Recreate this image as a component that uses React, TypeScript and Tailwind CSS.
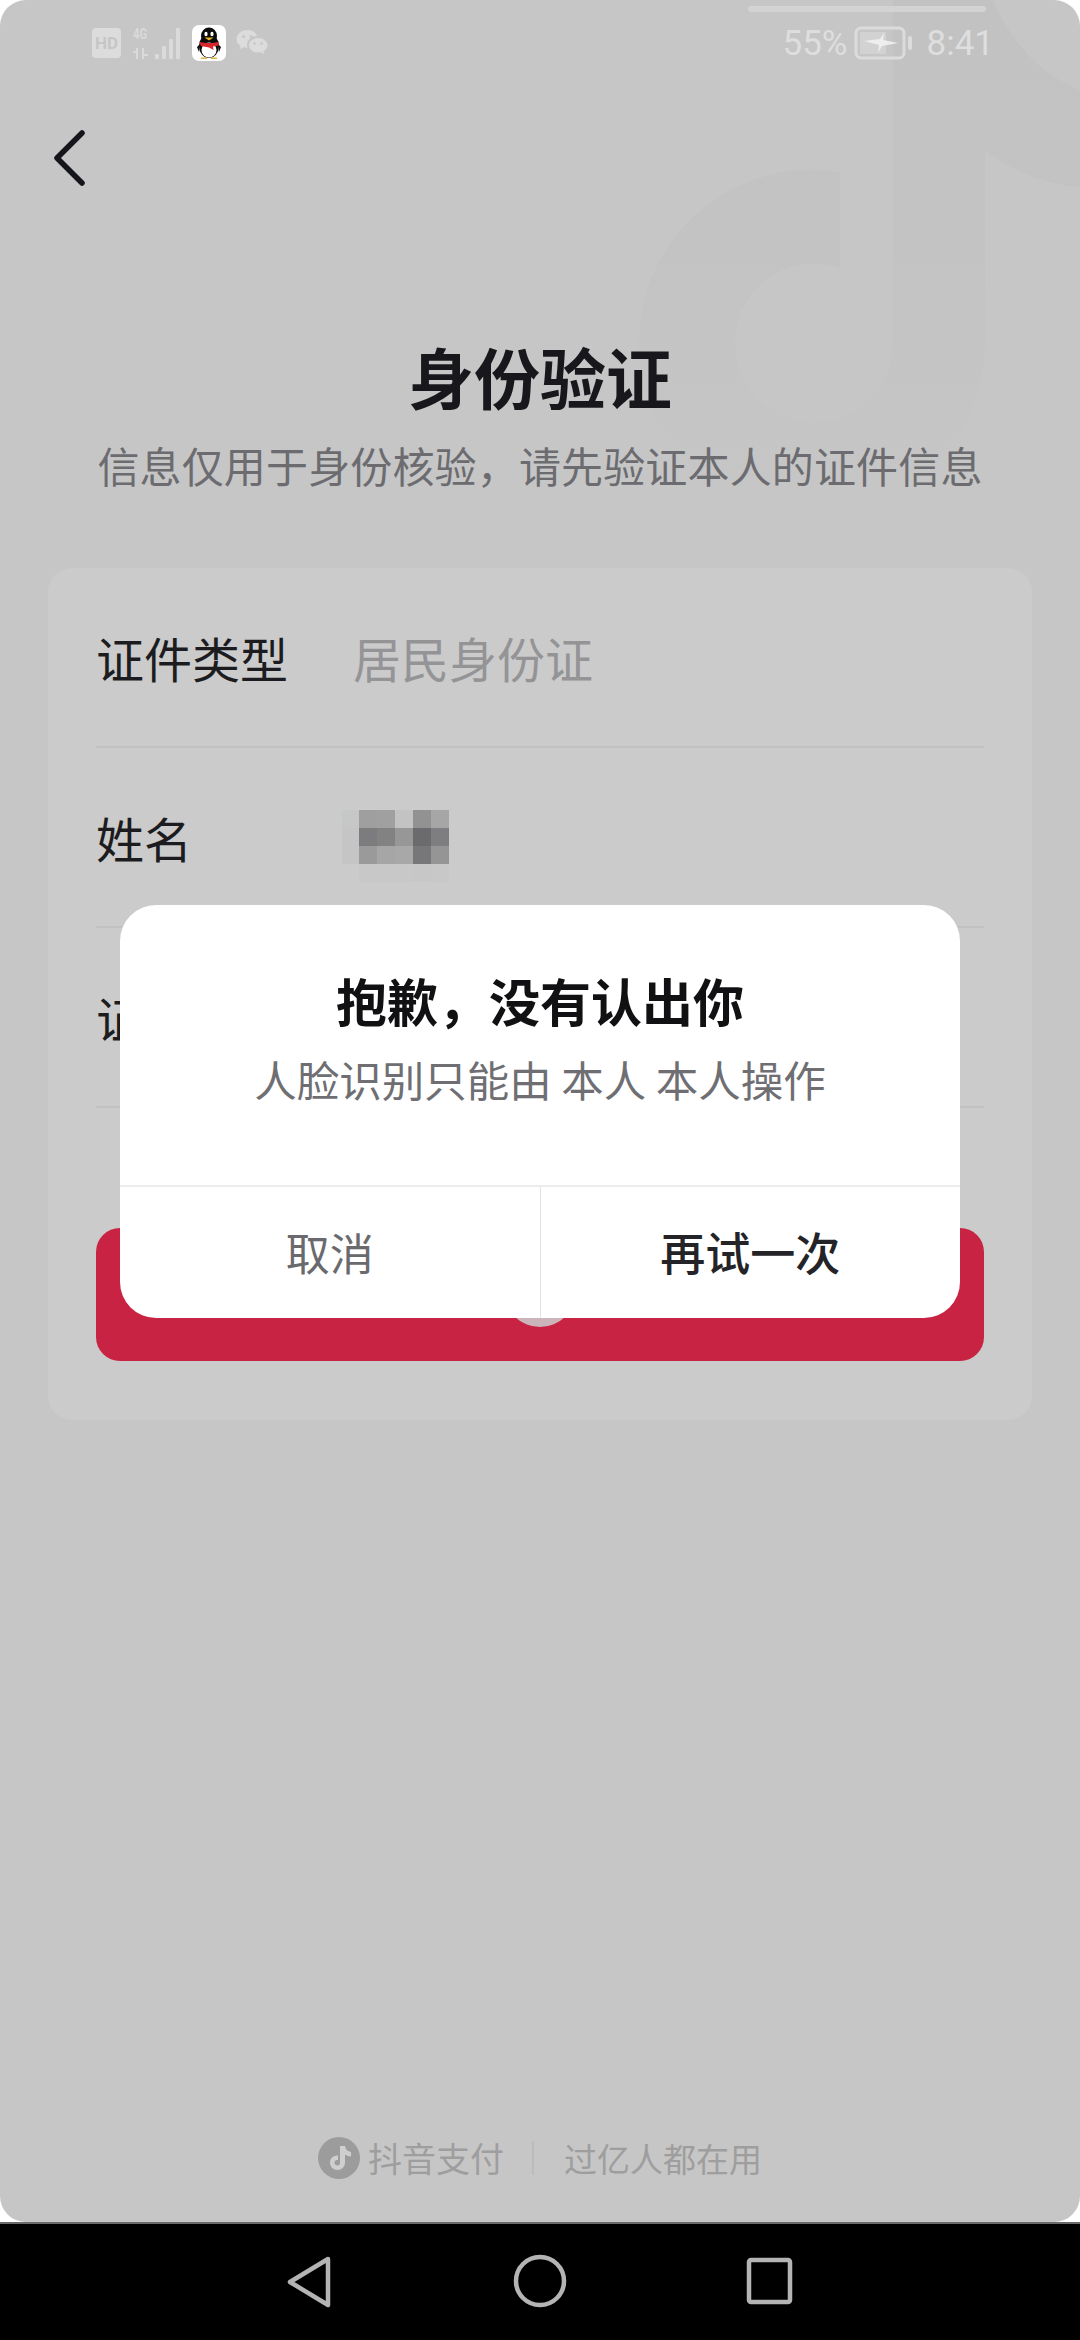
const cjk = 'font-["Noto_Sans_CJK_SC","Noto_Sans",sans-serif]';

// mosaic over the real name, cell by cell
const mosaic = [
  'bg-[#c6c7c7]', 'bg-[#9f9f9f]', 'bg-[#a0a0a0]', 'bg-[#c3c3c3]', 'bg-[#929292]', 'bg-[#a6a6a6]',
  'bg-[#c5c5c5]', 'bg-[#7c7c7e]', 'bg-[#828282]', 'bg-[#979797]', 'bg-[#6b6b6d]', 'bg-[#7e7e80]',
  'bg-[#c5c5c5]', 'bg-[#9a9a9a]', 'bg-[#a6a6a6]', 'bg-[#a8a8a8]', 'bg-[#77777a]', 'bg-[#959595]',
  'bg-[#cbcbcb]', 'bg-[#c8c8c8]', 'bg-[#c8c8c8]', 'bg-[#c8c8c8]', 'bg-[#c7c7c7]', 'bg-[#c8c8c8]',
];

function Watermark() {
  return (
    <svg className="absolute left-0 top-0" width="1080" height="520" viewBox="0 0 1080 520">
      <defs>
        <linearGradient id="note" x1="0" y1="0" x2="0" y2="1">
          <stop offset="0" stopColor="#c2c2c2" />
          <stop offset="0.5" stopColor="#c3c3c3" />
          <stop offset="0.8" stopColor="#c5c5c5" />
          <stop offset="1" stopColor="#c6c6c6" />
        </linearGradient>
      </defs>
      <path
        d="M893 0L993 0C1010 40 1040 75 1080 90L1080 187C1045 185 1010 170 985 150L985 345A173 173 0 1 1 840 172L840 268A79 79 0 1 0 893 347Z"
        fill="url(#note)"
      />
    </svg>
  );
}

function QQIcon() {
  return (
    <svg width="34" height="36" viewBox="0 0 34 36">
      <rect width="34" height="36" rx="7" fill="#fff" />
      <ellipse cx="17" cy="21" rx="10" ry="12" fill="#0b0b0b" />
      <ellipse cx="17" cy="11" rx="8" ry="8.5" fill="#0b0b0b" />
      <path d="M5 22L8 19L7 27ZM29 22L26 19L27 27Z" fill="#0b0b0b" />
      <ellipse cx="17" cy="25" rx="7.5" ry="7.5" fill="#fff" />
      <ellipse cx="14" cy="9" rx="1.6" ry="2.2" fill="#fff" />
      <ellipse cx="20" cy="9" rx="1.6" ry="2.2" fill="#fff" />
      <path d="M12.5 12.5H21.5L17 15.5Z" fill="#eeb31f" />
      <path d="M7 16.5C12 18.5 22 18.5 27 16.5L26.5 20.5L21 21.5L21.5 25L17 22.5L9 21Z" fill="#d8262c" />
      <path d="M9 32.5H15V34H9ZM19 32.5H25V34H19Z" fill="#e3b342" />
    </svg>
  );
}

function WechatIcon() {
  return (
    <svg width="32" height="28" viewBox="0 0 32 28" fill="#dcdcdc">
      <path d="M11.5 1C5.4 1 .5 5 .5 10c0 2.8 1.5 5.3 4 7l-1 3.5 4-2.2c1 .3 2.1.4 3 .4h1.2c-.5-1-.7-2-.7-3 0-4.800 4.400-8.500 10-8.700C19.700 3.400 16 1 11.500 1Z" />
      <path d="M22 9c-5 0-9 3.300-9 7.300s4 7.300 9 7.300c1 0 1.900-.1 2.800-.4l3.400 2-.9-3c2.800-1.400 4.200-3.500 4.200-5.900C31.500 12.300 27 9 22 9Z" />
      <circle cx="7.500" cy="7.500" r="1.500" fill="#c6c6c6" />
      <circle cx="15" cy="7.500" r="1.500" fill="#c6c6c6" />
      <circle cx="18.500" cy="14.500" r="1.300" fill="#c6c6c6" />
      <circle cx="25.500" cy="14.500" r="1.300" fill="#c6c6c6" />
    </svg>
  );
}

function Signal() {
  return (
    <div className="flex items-end gap-[3px] h-[32px]">
      <div className="flex flex-col items-start justify-between h-[32px] w-[19px]">
        <span className="font-['Roboto',sans-serif] font-bold text-[15px] leading-[15px] text-[#dadada] scale-x-75 origin-left">4G</span>
        <svg width="16" height="11" viewBox="0 0 16 11" fill="#dadada">
          <path d="M3 0H5V11H3ZM0 3H3V5H0ZM9 0H11V11H9ZM11 6H15V8H11Z" />
        </svg>
      </div>
      <div className="w-[4px] h-[5px] bg-[#dadada] rounded-[1px]" />
      <div className="w-[4px] h-[13px] bg-[#dadada] rounded-[1px]" />
      <div className="w-[4px] h-[20px] bg-[#dadada] rounded-[1px]" />
      <div className="w-[4px] h-[31px] bg-[#dadada] rounded-[1px]" />
    </div>
  );
}

function Battery() {
  return (
    <svg width="60" height="34" viewBox="0 0 60 34">
      <rect x="2" y="2" width="48" height="30" rx="5" fill="none" stroke="#dcdcdc" strokeWidth="3" />
      <rect x="6" y="6" width="26" height="22" fill="#d2d2d2" />
      <path d="M10 15L26 13L30 7L29 14L44 17L28 20L24 27L25 19Z" fill="#eeeeee" />
      <rect x="54" y="10" width="4" height="14" rx="2" fill="#dcdcdc" />
    </svg>
  );
}

function StatusBar() {
  return (
    <div className="relative flex items-center justify-between h-[86px] pl-[92px] pr-[86px]">
      <div className="absolute left-[748px] top-[6px] w-[238px] h-[6px] rounded-[3px] bg-[#d3d3d3]" />
      <div className="flex items-center gap-[12px]">
        <div className="flex items-center justify-center w-[29px] h-[30px] rounded-[4px] bg-[#dcdcdc] font-['Roboto',sans-serif] font-bold text-[17px] leading-none text-[#c6c6c6]">
          HD
        </div>
        <Signal />
        <QQIcon />
        <div className="ml-[-2px]">
          <WechatIcon />
        </div>
      </div>
      <div className="flex items-center font-['Roboto',sans-serif] font-normal text-[35px] leading-none text-[#dedede]">
        <span>55%</span>
        <span className="ml-[6px]">
          <Battery />
        </span>
        <span className="ml-[13px]">8:41</span>
      </div>
    </div>
  );
}

function FormRow({ label, children }: { label: string; children?: React.ReactNode }) {
  return (
    <div className="flex items-center h-[180px] border-b-2 border-[#c1c1c1]">
      <span className="w-[257px] text-[48px] leading-none text-[#1c1c20]">{label}</span>
      {children}
    </div>
  );
}

function Dialog() {
  return (
    <div className="absolute inset-0 flex items-center justify-center">
      <div className="flex flex-col w-[840px] h-[413px] rounded-[36px] bg-white overflow-hidden">
        <div className="flex flex-col items-center h-[280px] pt-[64px]">
          <div className="text-[51px] leading-[62px] font-bold text-[#111113]">抱歉，没有认出你</div>
          <div className="mt-[20px] text-[42.5px] leading-[56px] text-[#6f6f73] whitespace-pre">人脸识别只能由 本人 本人操作</div>
        </div>
        <div className="flex flex-1 border-t-2 border-[#ececec]">
          <div className="flex items-center justify-center flex-1 border-r border-[#e3e3e3] text-[44px] text-[#6a6a6e]">取消</div>
          <div className="flex items-center justify-center flex-1 text-[45px] font-medium text-[#242428]">再试一次</div>
        </div>
      </div>
    </div>
  );
}

function Footer() {
  return (
    <div className="mt-auto mb-[43px] flex items-center justify-center h-[42px] text-[33px] leading-none text-[#9e9e9e]">
      <svg width="42" height="42" viewBox="0 0 42 42">
        <circle cx="21" cy="21" r="21" fill="#9c9c9c" />
        <path
          d="M22 9H27C27.500 12.500 29.500 14.500 33 15V19.500C30.500 19.500 28.500 18.700 27 17.500V25.500C27 30 23.500 33 19.500 33C15.500 33 12 30 12 25.500C12 21 16 18 20 18.500V23C18 22.500 16.500 23.800 16.500 25.500C16.500 27.200 17.800 28.500 19.500 28.500C21.200 28.500 22 27.200 22 25.500Z"
          fill="#cfcfcf"
        />
      </svg>
      <span className="ml-[8px] text-[34px]">抖音支付</span>
      <div className="ml-[28px] mr-[30px] w-[2px] h-[34px] bg-[#bcbcbc]" />
      <span>过亿人都在用</span>
    </div>
  );
}

function NavBar() {
  return (
    <div className="flex items-center justify-center h-[118px] bg-black border-t-2 border-[#6a6a6a]">
      <svg width="1080" height="116" viewBox="0 0 1080 116" fill="none" stroke="#b4b4b4" strokeWidth="4.500" strokeLinejoin="round">
        <path d="M328 35L290 58L328 81Z" />
        <circle cx="540" cy="57" r="24" />
        <rect x="749" y="36" width="41" height="42" rx="2" />
      </svg>
    </div>
  );
}

export default function App() {
  return (
    <div className={`flex flex-col w-[1080px] h-[2340px] bg-white ${cjk}`}>
      <div className="relative flex flex-col h-[2222px] rounded-[26px] overflow-hidden bg-[#c6c6c6]">
        <Watermark />
        <div className="relative flex flex-col flex-1">
          <StatusBar />
          <div className="pl-[53px] pt-[44px]">
            <svg width="34" height="56" viewBox="0 0 34 56" fill="none" stroke="#15151c" strokeWidth="5.500" strokeLinecap="round" strokeLinejoin="round">
              <path d="M29 3L4 28L29 53" />
            </svg>
          </div>
          <h1 className="mt-[149px] text-center text-[66px] leading-[80px] font-bold text-[#17171c]">身份验证</h1>
          <p className="mt-[20px] text-center text-[42px] leading-[60px] tracking-[0.15px] text-[#6c6c70]">信息仅用于身份核验，请先验证本人的证件信息</p>

          <div className="mt-[73px] mx-[48px] h-[852px] px-[48px] rounded-[24px] bg-[#cbcbcb]">
            <FormRow label="证件类型">
              <span className="text-[48px] leading-none text-[#949496]">居民身份证</span>
            </FormRow>
            <FormRow label="姓名">
              <div className="grid grid-cols-[17px_18px_18px_18px_18px_18px] auto-rows-[18px] ml-[-11px] mt-[18px]">
                {mosaic.map((cell, i) => (
                  <div key={i} className={cell} />
                ))}
              </div>
            </FormRow>
            <FormRow label="证件号码" />
            <div className="flex items-center justify-center mt-[120px] h-[133px] rounded-[24px] bg-[#c92343]">
              <div className="w-[72px] h-[72px] mb-[8px] rounded-full bg-[#cbb5bb]" />
            </div>
          </div>

          <Footer />
        </div>
        <Dialog />
      </div>
      <NavBar />
    </div>
  );
}
